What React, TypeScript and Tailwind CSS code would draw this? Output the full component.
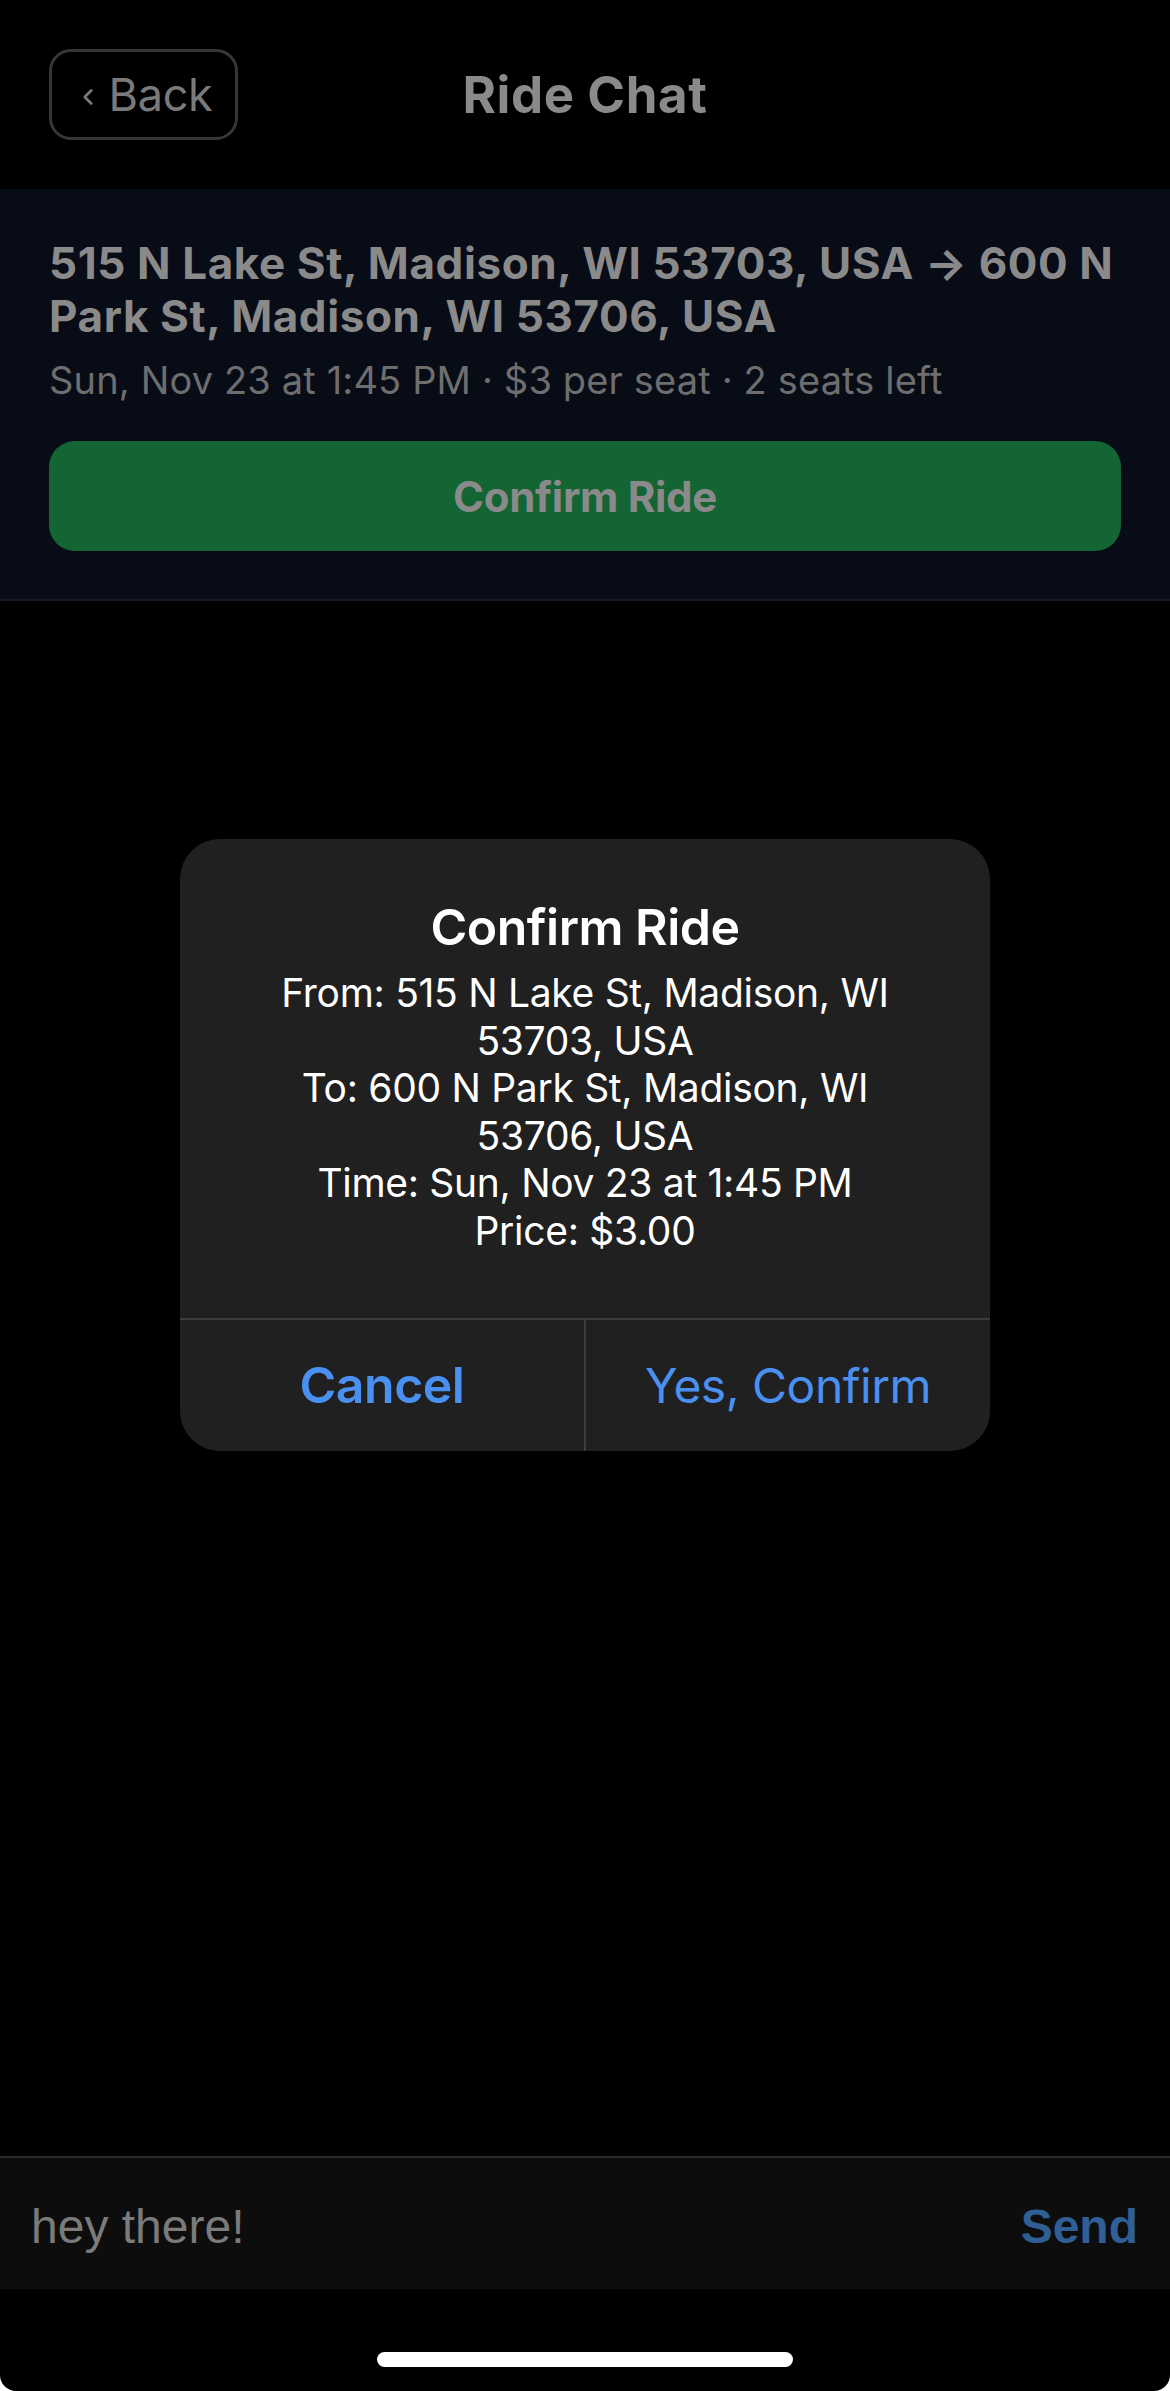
import { ChevronLeft } from "lucide-react";

const FROM = "515 N Lake St, Madison, WI 53703, USA";
const TO = "600 N Park St, Madison, WI 53706, USA";

export default function App() {
  return (
    <div className="bg-white w-[1170px] h-[2391px]">
      <div className="relative flex flex-col h-full bg-black rounded-b-[16px] overflow-hidden font-['Inter','Noto_Sans',sans-serif]">
        {/* header */}
        <div className="h-[189px] flex items-start px-[49px] pt-[49px] relative">
          <button className="h-[91px] w-[189px] rounded-[22px] border-[3px] border-[#363636] flex items-center justify-center gap-[8px] text-[#7a7a7a] text-[45px] tracking-[-0.3px]">
            <ChevronLeft size={26} strokeWidth={2.5} className="mt-[4px]" />
            <span>Back</span>
          </button>
          <h1 className="absolute left-0 right-0 top-[62px] text-center text-[#8a8a8a] text-[51px] font-bold leading-[66px] tracking-[0.6px] pointer-events-none">
            Ride Chat
          </h1>
        </div>

        {/* ride card */}
        <div className="bg-[#080c16] border-b-2 border-[#141925] px-[49px] pt-[48px] pb-[48px]">
          <p className="text-[#8a8a8a] text-[44px] font-bold leading-[53px] tracking-[0.6px]">
            {FROM} → {TO}
          </p>
          <p className="mt-[14px] text-[#6e6e6e] text-[38px] leading-[47px] tracking-[0.15px]">
            Sun, Nov 23 at 1:45 PM · $3 per seat · 2 seats left
          </p>
          <button className="mt-[37px] w-full h-[110px] rounded-[26px] bg-[#146534] text-[#8a8a8a] text-[42px] font-bold tracking-[-0.3px]">
            Confirm Ride
          </button>
        </div>

        {/* messages */}
        <div className="flex-1" />

        {/* input bar */}
        <div className="h-[133px] border-t-2 border-[#2a2a2a] bg-[#0d0d0d] flex items-center justify-between pl-[31px] pr-[32px] pt-[6px] font-['Liberation_Sans',Arial,sans-serif]">
          <span className="text-[#7b7b7b] text-[48px]">hey there!</span>
          <span className="text-[#2f5f94] text-[48px] font-bold">Send</span>
        </div>

        {/* home indicator */}
        <div className="h-[102px] flex items-start justify-center pt-[63px]">
          <div className="w-[416px] h-[15px] rounded-full bg-white" />
        </div>

        {/* alert */}
        <div className="absolute inset-0 flex justify-center pt-[839px]">
          <div className="w-[810px] h-[612px] rounded-[40px] bg-[#202020] flex flex-col overflow-hidden">
            <div className="flex-1 flex flex-col items-center pt-[58px] px-[40px] text-center text-white">
              <h2 className="text-[50px] font-semibold leading-[61px] tracking-[-0.5px]">Confirm Ride</h2>
              <p className="mt-[11px] text-[39px] leading-[47.5px] tracking-[-0.3px]">
                From: 515 N Lake St, Madison, WI
                <br />
                53703, USA
                <br />
                To: 600 N Park St, Madison, WI
                <br />
                53706, USA
                <br />
                Time: Sun, Nov 23 at 1:45 PM
                <br />
                Price: $3.00
              </p>
            </div>
            <div className="h-[133px] border-t-2 border-[#3c3c3c] flex">
              <button className="flex-1 border-r-2 border-[#3c3c3c] text-[#4a90f0] text-[50px] font-semibold tracking-[-0.5px]">
                Cancel
              </button>
              <button className="flex-1 text-[#4a90f0] text-[48px] tracking-[-0.5px]">Yes, Confirm</button>
            </div>
          </div>
        </div>
      </div>
    </div>
  );
}
